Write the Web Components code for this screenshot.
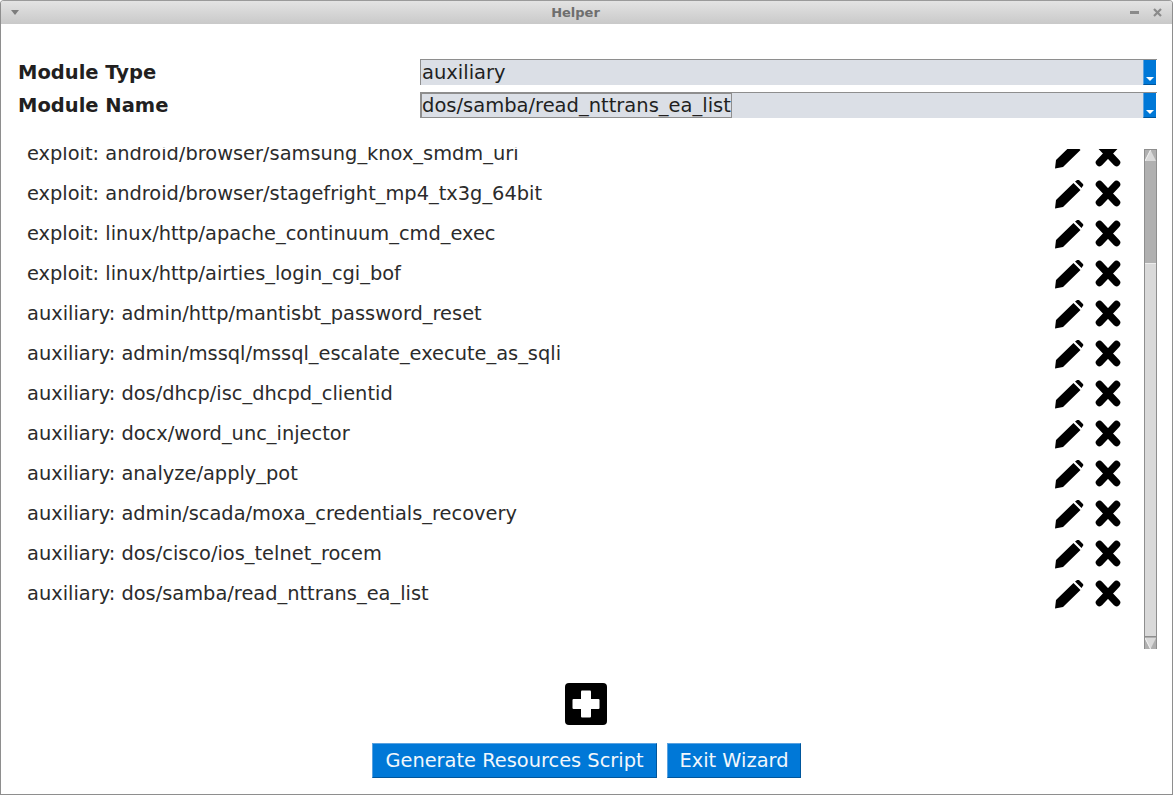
<!DOCTYPE html>
<html>
<head>
<meta charset="utf-8">
<title>Helper</title>
<style>
    html, body { margin: 0; height: 100%; background: #fff; overflow: hidden; }
    body { font-family: "DejaVu Sans", sans-serif; color: #221f1f; }
</style>
</head>
<body>
<helper-window caption="Helper">
    <wizard-field label="Module Type" value="auxiliary"></wizard-field>
    <wizard-field label="Module Name" value="dos/samba/read_nttrans_ea_list" selected></wizard-field>
    <module-list>
        <module-row cut>exploit: android/browser/samsung_knox_smdm_uri</module-row>
        <module-row>exploit: android/browser/stagefright_mp4_tx3g_64bit</module-row>
        <module-row>exploit: linux/http/apache_continuum_cmd_exec</module-row>
        <module-row>exploit: linux/http/airties_login_cgi_bof</module-row>
        <module-row>auxiliary: admin/http/mantisbt_password_reset</module-row>
        <module-row>auxiliary: admin/mssql/mssql_escalate_execute_as_sqli</module-row>
        <module-row>auxiliary: dos/dhcp/isc_dhcpd_clientid</module-row>
        <module-row>auxiliary: docx/word_unc_injector</module-row>
        <module-row>auxiliary: analyze/apply_pot</module-row>
        <module-row>auxiliary: admin/scada/moxa_credentials_recovery</module-row>
        <module-row>auxiliary: dos/cisco/ios_telnet_rocem</module-row>
        <module-row>auxiliary: dos/samba/read_nttrans_ea_list</module-row>
    </module-list>
    <wizard-actions></wizard-actions>
</helper-window>

<script>
class HelperWindow extends HTMLElement {
    constructor() {
        super();
        this.attachShadow({ mode: 'open' });
    }

    connectedCallback() {
        this.shadowRoot.innerHTML = `
            <style>
                :host {
                    display: flex;
                    flex-direction: column;
                    height: 795px;
                    box-sizing: border-box;
                    border: 1px solid #8e8e8e;
                    border-top-color: #9a9a9a;
                    border-radius: 4px 4px 0 0;
                    overflow: hidden;
                }
                .bar {
                    flex: none;
                    height: 23px;
                    display: flex;
                    align-items: center;
                    padding: 0 10px;
                    background: linear-gradient(#e3e3e3, #c9c9c9);
                }
                .title {
                    flex: 1;
                    text-align: center;
                    font: bold 13px "DejaVu Sans", sans-serif;
                    color: #6e6e6e;
                }
                svg { display: block; }
                .btns { display: flex; gap: 14px; align-items: center; }
                .body {
                    flex: 1;
                    display: flex;
                    flex-direction: column;
                    padding: 35px 15px 0 17px;
                    min-height: 0;
                }
            </style>
            <div class="bar">
                <svg width="10" height="6" viewBox="0 0 10 6"><path d="M0 0h8L4 5z" fill="#7d7d7d"/></svg>
                <div class="title">${this.getAttribute('caption')}</div>
                <div class="btns">
                    <svg width="9" height="9" viewBox="0 0 9 9"><rect y="3" width="9" height="3" fill="#8a8a8a"/></svg>
                    <svg width="9" height="9" viewBox="0 0 9 9"><path d="M1 1l7 7M8 1L1 8" stroke="#8a8a8a" stroke-width="2.2"/></svg>
                </div>
            </div>
            <div class="body"><slot></slot></div>
        `;
    }
}

class WizardField extends HTMLElement {
    constructor() {
        super();
        this.attachShadow({ mode: 'open' });
    }

    connectedCallback() {
        const selected = this.hasAttribute('selected');
        this.shadowRoot.innerHTML = `
            <style>
                :host {
                    display: flex;
                    height: 26px;
                    margin-bottom: 7px;
                    font: 19.5px/28px "DejaVu Sans", sans-serif;
                }
                .label { width: 402px; font-weight: bold; flex: none; }
                .combo {
                    flex: 1;
                    display: flex;
                    box-sizing: border-box;
                    border-top: 1px solid #8e8e8e;
                    min-width: 0;
                }
                .value {
                    flex: 1;
                    background: #dbdfe6;
                    border-left: 1px solid #8e8e8e;
                    line-height: 26px;
                    white-space: nowrap;
                }
                .value span { padding-left: 1px; }
                .value span.sel {
                    display: inline-block;
                    height: 25px;
                    line-height: 24px;
                    box-sizing: border-box;
                    border: 1px solid #8e8e8e;
                    padding-left: 0;
                    vertical-align: top;
                }
                .arrow {
                    flex: none;
                    width: 13px;
                    margin-right: 1px;
                    box-sizing: border-box;
                    background: #0078d7;
                    border-left: 1px solid #5aa2e0;
                    border-bottom: 1px solid #00569c;
                    display: flex;
                    align-items: flex-end;
                    justify-content: center;
                    padding-bottom: 3px;
                }
                svg { display: block; }
            </style>
            <div class="label">${this.getAttribute('label')}</div>
            <div class="combo">
                <div class="value"><span class="${selected ? 'sel' : ''}">${this.getAttribute('value')}</span></div>
                <div class="arrow"><svg width="8" height="4" viewBox="0 0 8 4"><path d="M0 0h8L4 4z" fill="#fff"/></svg></div>
            </div>
        `;
    }
}

class ModuleList extends HTMLElement {
    constructor() {
        super();
        this.attachShadow({ mode: 'open' });
    }

    connectedCallback() {
        this.shadowRoot.innerHTML = `
            <style>
                :host {
                    display: flex;
                    flex: none;
                    height: 502px;
                    margin-top: 22px;
                }
                .view { flex: 1; overflow: hidden; min-width: 0; }
                .inner { margin-top: -14px; }
                .track {
                    flex: none;
                    width: 13px;
                    margin-top: 2px;
                    box-sizing: border-box;
                    display: flex;
                    flex-direction: column;
                    background: #b0b0b0;
                    border: 1px solid #8e8e8e;
                    border-bottom: 0;
                }
                .cap { flex: none; height: 11px; background: #b0b0b0; }
                .cap svg { display: block; }
                .gap { flex: none; height: 102px; }
                .thumb {
                    flex: 1;
                    background: #d9d9d9;
                    border-top: 1px solid #ececec;
                    border-bottom: 1px solid #8e8e8e;
                    margin-bottom: 1px;
                }
            </style>
            <div class="view"><div class="inner"><slot></slot></div></div>
            <div class="track">
                <div class="cap"><svg width="11" height="11" viewBox="0 0 11 11"><path d="M5.5 0L11 11H0z" fill="#d9d9d9"/><path d="M5.5 0L0 11" stroke="#f4f4f4" fill="none"/></svg></div>
                <div class="gap"></div>
                <div class="thumb"></div>
                <div class="cap"><svg width="11" height="11" viewBox="0 0 11 11"><path d="M0 0H11L5.5 11z" fill="#d9d9d9"/><path d="M0 0L5.5 11" stroke="#f4f4f4" fill="none"/></svg></div>
            </div>
        `;
    }
}

class ModuleRow extends HTMLElement {
    constructor() {
        super();
        this.attachShadow({ mode: 'open' });
    }

    connectedCallback() {
        // the row scrolled half out of view has its icons cut lower than its text
        const clip = this.hasAttribute('cut') ? 'clip-path: inset(12px 0 0 0);' : '';
        this.shadowRoot.innerHTML = `
            <style>
                :host {
                    display: flex;
                    align-items: center;
                    height: 40px;
                    padding-left: 9px;
                    font: 19.4px "DejaVu Sans", sans-serif;
                    color: #2b2b2b;
                }
                .name { flex: 1; white-space: nowrap; }
                .icons { display: flex; gap: 11px; margin-right: 23px; padding-top: 3px; ${clip} }
                svg { display: block; }
            </style>
            <div class="name"><slot></slot></div>
            <div class="icons">
                <svg width="29" height="29" viewBox="0 0 29 29">
                    <path d="M1 20L18.5 3 25.5 10 8 27 0 28.5zM20 1.5L21.5 .5a2 2 0 0 1 3 0L27.5 3.5a2 2 0 0 1 0 3L26.5 8z" fill="#000"/>
                </svg>
                <svg width="26" height="27" viewBox="0 0 26 27">
                    <path d="M4.5 4.5L21.5 22.5M21.5 4.5L4.5 22.5" stroke="#000" stroke-width="7.5" stroke-linecap="round" fill="none"/>
                </svg>
            </div>
        `;
    }
}

class WizardActions extends HTMLElement {
    constructor() {
        super();
        this.attachShadow({ mode: 'open' });
    }

    connectedCallback() {
        this.shadowRoot.innerHTML = `
            <style>
                :host {
                    display: flex;
                    flex-direction: column;
                    align-items: center;
                    padding-top: 34px;
                    gap: 18px;
                    margin-left: -17px;
                    margin-right: -15px;
                }
                svg { display: block; margin-left: -1px; }
                .row { display: flex; gap: 10px; }
                button {
                    height: 35px;
                    padding: 0;
                    box-sizing: border-box;
                    background: #0078d7;
                    color: #f2f7fc;
                    font: 19.4px "DejaVu Sans", sans-serif;
                    border: 1px solid;
                    border-color: #5aa2e0 #00569c #00569c #5aa2e0;
                    border-radius: 0;
                }
                .gen { width: 285px; }
                .exit { width: 134px; }
            </style>
            <svg width="42" height="42" viewBox="0 0 42 42">
                <rect width="42" height="42" rx="4" fill="#000"/>
                <rect x="16" y="7.5" width="10" height="27" rx="1" fill="#fff"/>
                <rect x="7.5" y="16" width="27" height="10" rx="1" fill="#fff"/>
            </svg>
            <div class="row">
                <button class="gen">Generate Resources Script</button>
                <button class="exit">Exit Wizard</button>
            </div>
        `;
    }
}

customElements.define('helper-window', HelperWindow);
customElements.define('wizard-field', WizardField);
customElements.define('module-list', ModuleList);
customElements.define('module-row', ModuleRow);
customElements.define('wizard-actions', WizardActions);
</script>
</body>
</html>
